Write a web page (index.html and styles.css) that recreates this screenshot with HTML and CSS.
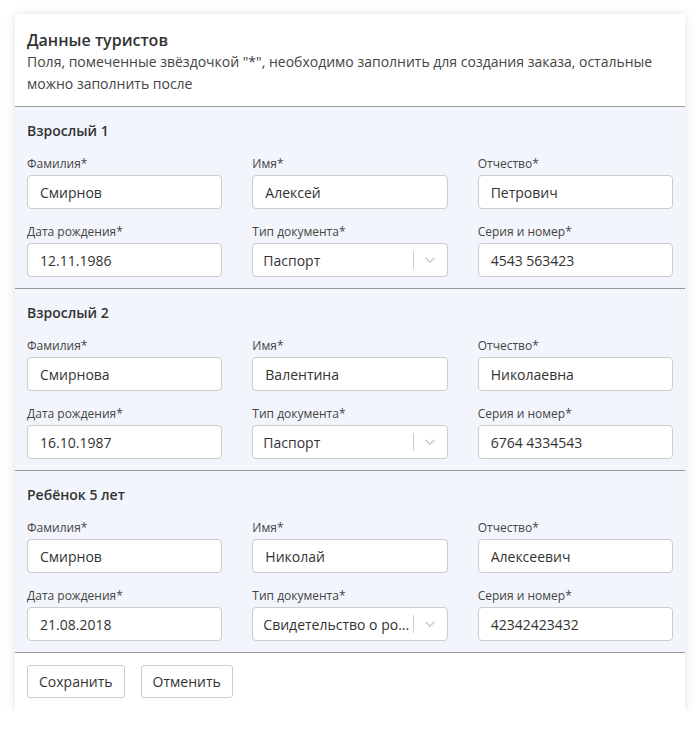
FILE: index.html
```html
<!DOCTYPE html>
<html lang="ru">
<head>
    <meta charset="UTF-8">
    <title>Данные туристов</title>
    <link rel="stylesheet" href="styles.css">
</head>
<body>

<div class="card">
    <div class="card-header">
        <h2 class="card-title">Данные туристов</h2>
        <p class="card-note">Поля, помеченные звёздочкой "*", необходимо заполнить для создания заказа, остальные можно заполнить после</p>
    </div>

    <div class="tourist">
        <h3 class="tourist-title">Взрослый 1</h3>
        <div class="fields">
            <label class="field"><span class="field-label">Фамилия*</span><input type="text" value="Смирнов"></label>
            <label class="field"><span class="field-label">Имя*</span><input type="text" value="Алексей"></label>
            <label class="field"><span class="field-label">Отчество*</span><input type="text" value="Петрович"></label>
            <label class="field"><span class="field-label">Дата рождения*</span><input type="text" value="12.11.1986"></label>
            <div class="field"><span class="field-label">Тип документа*</span>
                <div class="select">
                    <span class="select-value">Паспорт</span>
                    <span class="select-sep"></span>
                    <svg class="select-arrow" width="12" height="8" viewBox="0 0 12 8"><path d="M1.5 1.8 6 6.2l4.5-4.4" fill="none" stroke="#ccc" stroke-width="1.6"/></svg>
                </div>
            </div>
            <label class="field"><span class="field-label">Серия и номер*</span><input type="text" value="4543 563423"></label>
        </div>
    </div>

    <div class="tourist">
        <h3 class="tourist-title">Взрослый 2</h3>
        <div class="fields">
            <label class="field"><span class="field-label">Фамилия*</span><input type="text" value="Смирнова"></label>
            <label class="field"><span class="field-label">Имя*</span><input type="text" value="Валентина"></label>
            <label class="field"><span class="field-label">Отчество*</span><input type="text" value="Николаевна"></label>
            <label class="field"><span class="field-label">Дата рождения*</span><input type="text" value="16.10.1987"></label>
            <div class="field"><span class="field-label">Тип документа*</span>
                <div class="select">
                    <span class="select-value">Паспорт</span>
                    <span class="select-sep"></span>
                    <svg class="select-arrow" width="12" height="8" viewBox="0 0 12 8"><path d="M1.5 1.8 6 6.2l4.5-4.4" fill="none" stroke="#ccc" stroke-width="1.6"/></svg>
                </div>
            </div>
            <label class="field"><span class="field-label">Серия и номер*</span><input type="text" value="6764 4334543"></label>
        </div>
    </div>

    <div class="tourist">
        <h3 class="tourist-title">Ребёнок 5 лет</h3>
        <div class="fields">
            <label class="field"><span class="field-label">Фамилия*</span><input type="text" value="Смирнов"></label>
            <label class="field"><span class="field-label">Имя*</span><input type="text" value="Николай"></label>
            <label class="field"><span class="field-label">Отчество*</span><input type="text" value="Алексеевич"></label>
            <label class="field"><span class="field-label">Дата рождения*</span><input type="text" value="21.08.2018"></label>
            <div class="field"><span class="field-label">Тип документа*</span>
                <div class="select">
                    <span class="select-value" title="Свидетельство о рождении">Свидетельство о ро...</span>
                    <span class="select-sep"></span>
                    <svg class="select-arrow" width="12" height="8" viewBox="0 0 12 8"><path d="M1.5 1.8 6 6.2l4.5-4.4" fill="none" stroke="#ccc" stroke-width="1.6"/></svg>
                </div>
            </div>
            <label class="field"><span class="field-label">Серия и номер*</span><input type="text" value="42342423432"></label>
        </div>
    </div>

    <div class="card-footer">
        <button type="button" class="btn">Сохранить</button>
        <button type="button" class="btn">Отменить</button>
    </div>
</div>

</body>
</html>
```

FILE: styles.css
```css
* { box-sizing: border-box; margin: 0; padding: 0 }
body {
    font-family: "Open Sans", "Noto Sans", sans-serif;
    background: #fff;
    color: #333;
    padding: 14px 14px 0 15px;
}

.card {
    width: 670px;
    background: #fff;
    box-shadow: 0 1px 10px rgba(0,0,0,0.12);
}
.card-header {
    padding: 15px 12px 11px;
    border-bottom: 1px solid #999;
}
.card-title {
    font-size: 16px;
    font-weight: 600;
    line-height: 22px;
    color: #333;
}
.card-note {
    font-size: 14px;
    line-height: 22px;
    color: #444;
}

/* блок одного туриста */
.tourist {
    background: #f2f6fc;
    padding: 14px 12px 11px;
    border-bottom: 1px solid #999;
}
.tourist-title {
    font-size: 14px;
    font-weight: 600;
    line-height: 20px;
    color: #333;
    margin-bottom: 15px;
}
.fields {
    display: grid;
    grid-template-columns: repeat(3, minmax(0, 1fr));
    column-gap: 30px;
    row-gap: 15px;
}
.field { display: block; min-width: 0 }
.field-label {
    display: block;
    font-size: 12px;
    line-height: 16px;
    color: #444;
    margin-bottom: 3px;
}
.field input,
.select {
    display: block;
    width: 100%;
    height: 34px;
    padding: 0 12px;
    font: inherit;
    font-size: 14px;
    color: #333;
    background: #fff;
    border: 1px solid #ccc;
    border-radius: 4px;
    outline: none;
}
.select {
    display: flex;
    align-items: center;
    padding: 0 0 0 10px;
}
.select-value {
    flex: 1;
    min-width: 0;
    white-space: nowrap;
}
.select-sep {
    width: 1px;
    height: 18px;
    background: #ccc;
}
.select-arrow { margin: 0 11px 0 10px }

.card-footer {
    display: flex;
    gap: 16px;
    padding: 12px 12px 13px;
}
.btn {
    height: 33px;
    padding: 0 11px;
    font: inherit;
    font-size: 14px;
    color: #333;
    background: #fff;
    border: 1px solid #ccc;
    border-radius: 3px;
    cursor: pointer;
}
```
